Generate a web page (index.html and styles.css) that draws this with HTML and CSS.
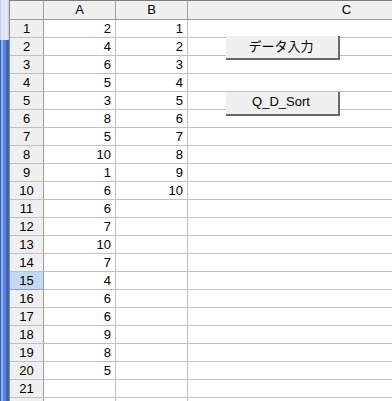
FILE: index.html
```html
<!DOCTYPE html>
<html lang="ja">
<head>
<meta charset="utf-8">
<link rel="stylesheet" href="styles.css">
</head>
<body>
<div class="sheet">
  <div class="strip"><div class="strip-top"></div><div class="strip-bottom"></div></div>
  <div class="area">
    <div class="grid" id="grid"></div>
    <button class="btn btn-input">データ入力</button>
    <button class="btn btn-sort">Q_D_Sort</button>
  </div>
</div>
<script src="app.js"></script>
</body>
</html>
```

FILE: app.js
```js
const a = [2,4,6,5,3,8,5,10,1,6,6,7,10,7,4,6,6,9,8,5];
const b = [1,2,3,4,5,6,7,8,9,10];
const g = document.getElementById('grid');
let h = '<div class="hd corner"></div><div class="hd col">A</div><div class="hd col">B</div><div class="hd col">C</div>';
for (let i = 1; i <= 22; i++) {
  const sel = i === 15 ? ' sel' : '';
  h += '<div class="rh' + sel + '">' + (i <= 21 ? i : '') + '</div>';
  h += '<div class="c num">' + (a[i-1] !== undefined ? a[i-1] : '') + '</div>';
  h += '<div class="c num">' + (b[i-1] !== undefined ? b[i-1] : '') + '</div>';
  h += '<div class="c"></div>';
}
g.innerHTML = h;
```

FILE: styles.css
```css
html, body {
  margin: 0;
  padding: 0;
  background: #ffffff;
  overflow: hidden;
}
body {
  font-family: "Liberation Sans", "Noto Sans CJK JP", sans-serif;
  font-size: 13px;
  color: #000;
}
.sheet {
  display: flex;
  width: 392px;
  height: 401px;
  overflow: hidden;
}
.strip {
  width: 10px;
  flex: none;
  display: flex;
  flex-direction: column;
  border-right: 1px solid #8a8a8a;
  box-sizing: border-box;
}
.strip-top {
  height: 40px;
  background: linear-gradient(90deg, #b9c6dd 0, #e8eef8 2px, #d6deec 4px, #eef2f9 6px, #c4cde0 9px);
}
.strip-bottom {
  flex: 1;
  background: linear-gradient(90deg, #3b5fbf 0, #3b5fbf 1px, #8fb0ea 1px, #8fb0ea 3px, #5d84d6 3px, #5d84d6 6px, #3e63c2 6px);
}
.area {
  position: relative;
  flex: 1;
  overflow: hidden;
}
.grid {
  display: grid;
  grid-template-columns: 34px 72px 72px 318px;
  grid-template-rows: 20px;
  grid-auto-rows: 18px;
}
.grid > div {
  box-sizing: border-box;
  border-right: 1px solid #c0c0c0;
  border-bottom: 1px solid #c0c0c0;
  line-height: 17px;
  white-space: nowrap;
}
.grid > .hd {
  background: #f0f0f0;
  border-top: 1px solid #7c7c7c;
  border-right: 1px solid #9e9e9e;
  border-bottom: 1px solid #9e9e9e;
  text-align: center;
  line-height: 18px;
}
.grid > .rh {
  background: #f0f0f0;
  border-right: 1px solid #9e9e9e;
  border-bottom: 1px solid #c0c0c0;
  text-align: center;
}
.grid > .rh.sel {
  background: #c5d8f1;
  border-bottom-color: #7fa3dc;
  border-right-color: #7fa3dc;
}
.grid > .num {
  text-align: right;
  padding-right: 4px;
}
.btn {
  position: absolute;
  left: 216px;
  width: 114px;
  height: 24px;
  margin: 0;
  padding: 0 2px 2px 0;
  box-sizing: border-box;
  background: #f0f0f0;
  border: none;
  border-right: 2px solid #6a6a6a;
  border-bottom: 2px solid #6a6a6a;
  font-family: "Noto Sans CJK JP", "Liberation Sans", sans-serif;
  font-size: 13px;
  color: #000;
  line-height: 20px;
}
.btn-input {
  top: 36px;
}
.btn-sort {
  top: 92px;
  font-family: "Liberation Sans", sans-serif;
}
```
